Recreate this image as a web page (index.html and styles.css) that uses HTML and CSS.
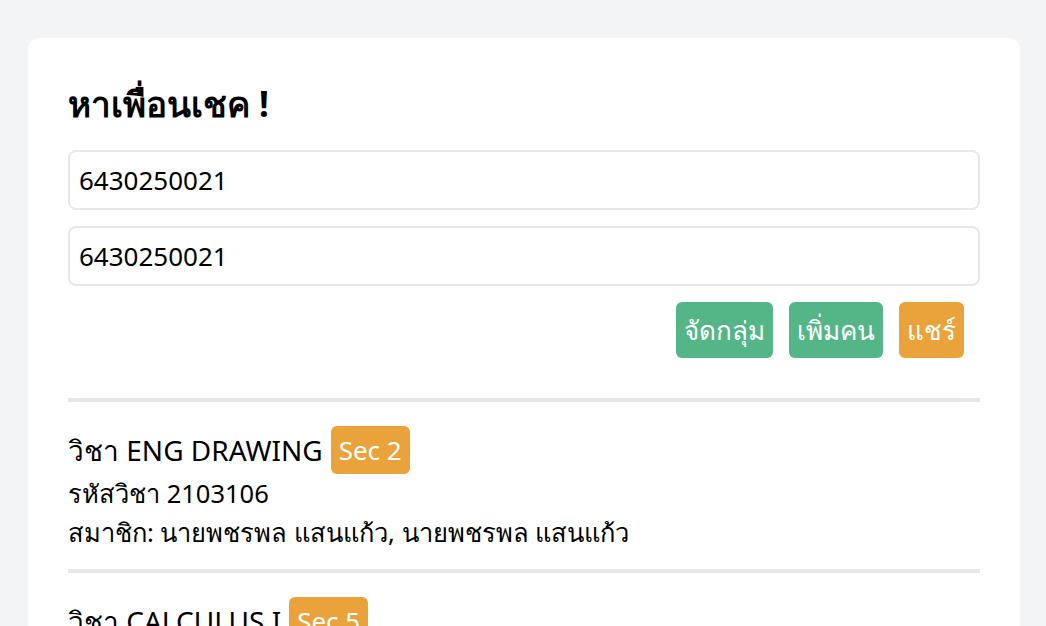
FILE: index.html
```html
<!DOCTYPE html>
<html lang="th">
<head>
<meta charset="utf-8">
<link rel="stylesheet" href="styles.css">
</head>
<body>
<div class="page">
  <div class="card">
    <h1 class="title">หาเพื่อนเชค !</h1>
    <input class="field" type="text" value="6430250021">
    <input class="field" type="text" value="6430250021">
    <div class="actions">
      <button class="btn green">จัดกลุ่ม</button>
      <button class="btn green">เพิ่มคน</button>
      <button class="btn orange">แชร์</button>
    </div>
    <div class="course">
      <div class="course-name">วิชา ENG DRAWING <span class="badge">Sec 2</span></div>
      <div class="line">รหัสวิชา 2103106</div>
      <div class="line">สมาชิก: นายพชรพล แสนแก้ว, นายพชรพล แสนแก้ว</div>
    </div>
    <div class="course">
      <div class="course-name">วิชา CALCULUS I <span class="badge">Sec 5</span></div>
      <div class="line">รหัสวิชา 2301107</div>
      <div class="line">สมาชิก: นายพชรพล แสนแก้ว, นายพชรพล แสนแก้ว</div>
    </div>
  </div>
</div>
</body>
</html>
```

FILE: styles.css
```css
* { box-sizing: border-box; }
html, body { margin: 0; padding: 0; }
body {
  background: #f3f4f6;
  font-family: "Noto Sans", "DejaVu Sans", sans-serif;
  color: #000;
}
.page { padding: 38px 26px 0 28px; }
.card {
  background: #fff;
  border-radius: 12px;
  padding: 40px 40px 40px 40px;
}
.title {
  margin: 0 0 20px 0;
  font-size: 35px;
  font-weight: 700;
  line-height: 52px;
}
.field {
  display: block;
  width: 100%;
  height: 60px;
  margin: 0 0 16px 0;
  padding: 0 9px;
  border: 2px solid #e5e7eb;
  border-radius: 8px;
  font-family: inherit;
  font-size: 26px;
  color: #000;
  background: #fff;
  outline: none;
}
.actions {
  display: flex;
  justify-content: flex-end;
  gap: 16px;
  padding: 0 16px 0 0;
  margin: 0 0 40px 0;
}
.btn {
  height: 56px;
  padding: 0 8px;
  border: none;
  border-radius: 6px;
  color: #fff;
  font-family: inherit;
  font-size: 26px;
}
.green { background: #54b687; }
.orange { background: #eaa23b; }
.course {
  border-top: 4px solid #e5e7eb;
  padding: 24px 0 17px 0;
}
.course-name {
  font-size: 28px;
  line-height: 48px;
  display: flex;
  align-items: center;
  gap: 8px;
}
.badge {
  background: #eaa23b;
  color: #fff;
  border-radius: 6px;
  padding: 0 8px;
  height: 48px;
  line-height: 48px;
  font-size: 26px;
}
.line {
  font-size: 25.5px;
  line-height: 39px;
}
```
